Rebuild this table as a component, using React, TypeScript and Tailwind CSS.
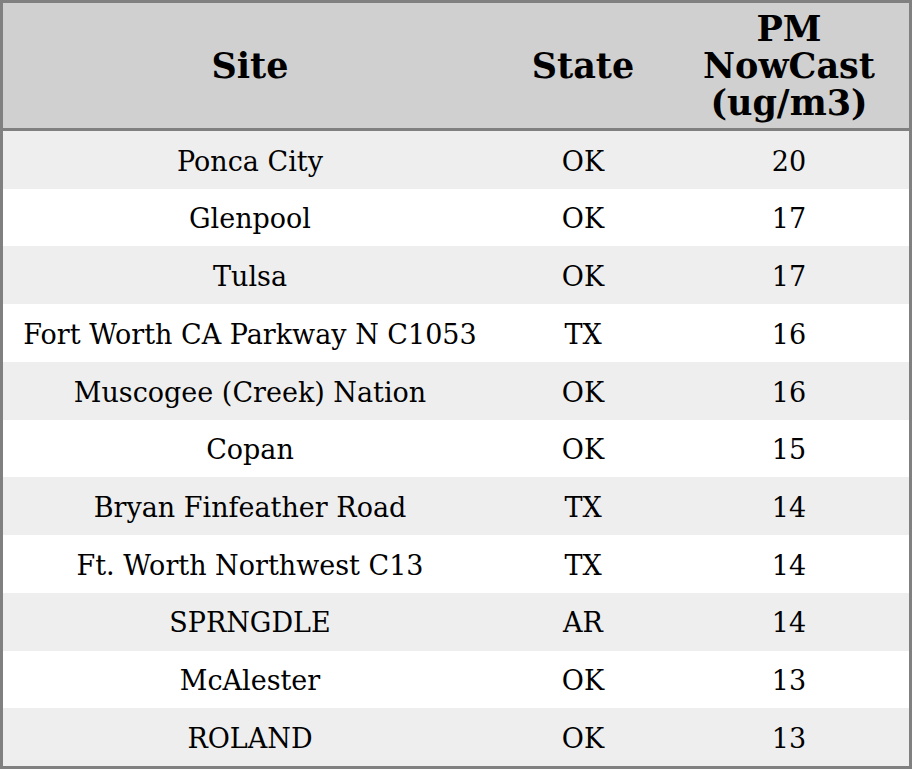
import React from 'react';

const rows: [string, string, number][] = [
  ['Ponca City', 'OK', 20],
  ['Glenpool', 'OK', 17],
  ['Tulsa', 'OK', 17],
  ['Fort Worth CA Parkway N C1053', 'TX', 16],
  ['Muscogee (Creek) Nation', 'OK', 16],
  ['Copan', 'OK', 15],
  ['Bryan Finfeather Road', 'TX', 14],
  ['Ft. Worth Northwest C13', 'TX', 14],
  ['SPRNGDLE', 'AR', 14],
  ['McAlester', 'OK', 13],
  ['ROLAND', 'OK', 13],
];

export default function App() {
  return (
    <div
      className="w-[912px] h-[769px] bg-white border-[3px] border-[#808080] flex flex-col text-black"
      style={{ fontFamily: '"DejaVu Serif", serif' }}
    >
      {/* header */}
      <div className="h-[128px] shrink-0 bg-[#d0d0d0] border-b-[3px] border-[#808080] flex items-center text-[35px] font-bold leading-[37px] text-center">
        <div className="w-[494px]">Site</div>
        <div className="w-[172px]">State</div>
        <div className="flex-1">PM<br />NowCast<br />(ug/m3)</div>
      </div>

      {/* rows */}
      <div className="flex-1 flex flex-col">
        {rows.map(([site, state, val], i) => (
          <div
            key={i}
            className={`flex-1 flex items-center pt-1 text-center text-[27px] ${i % 2 === 0 ? 'bg-[#eeeeee]' : 'bg-white'}`}
          >
            <div className="w-[494px]">{site}</div>
            <div className="w-[172px]">{state}</div>
            <div className="flex-1">{val}</div>
          </div>
        ))}
      </div>
    </div>
  );
}
